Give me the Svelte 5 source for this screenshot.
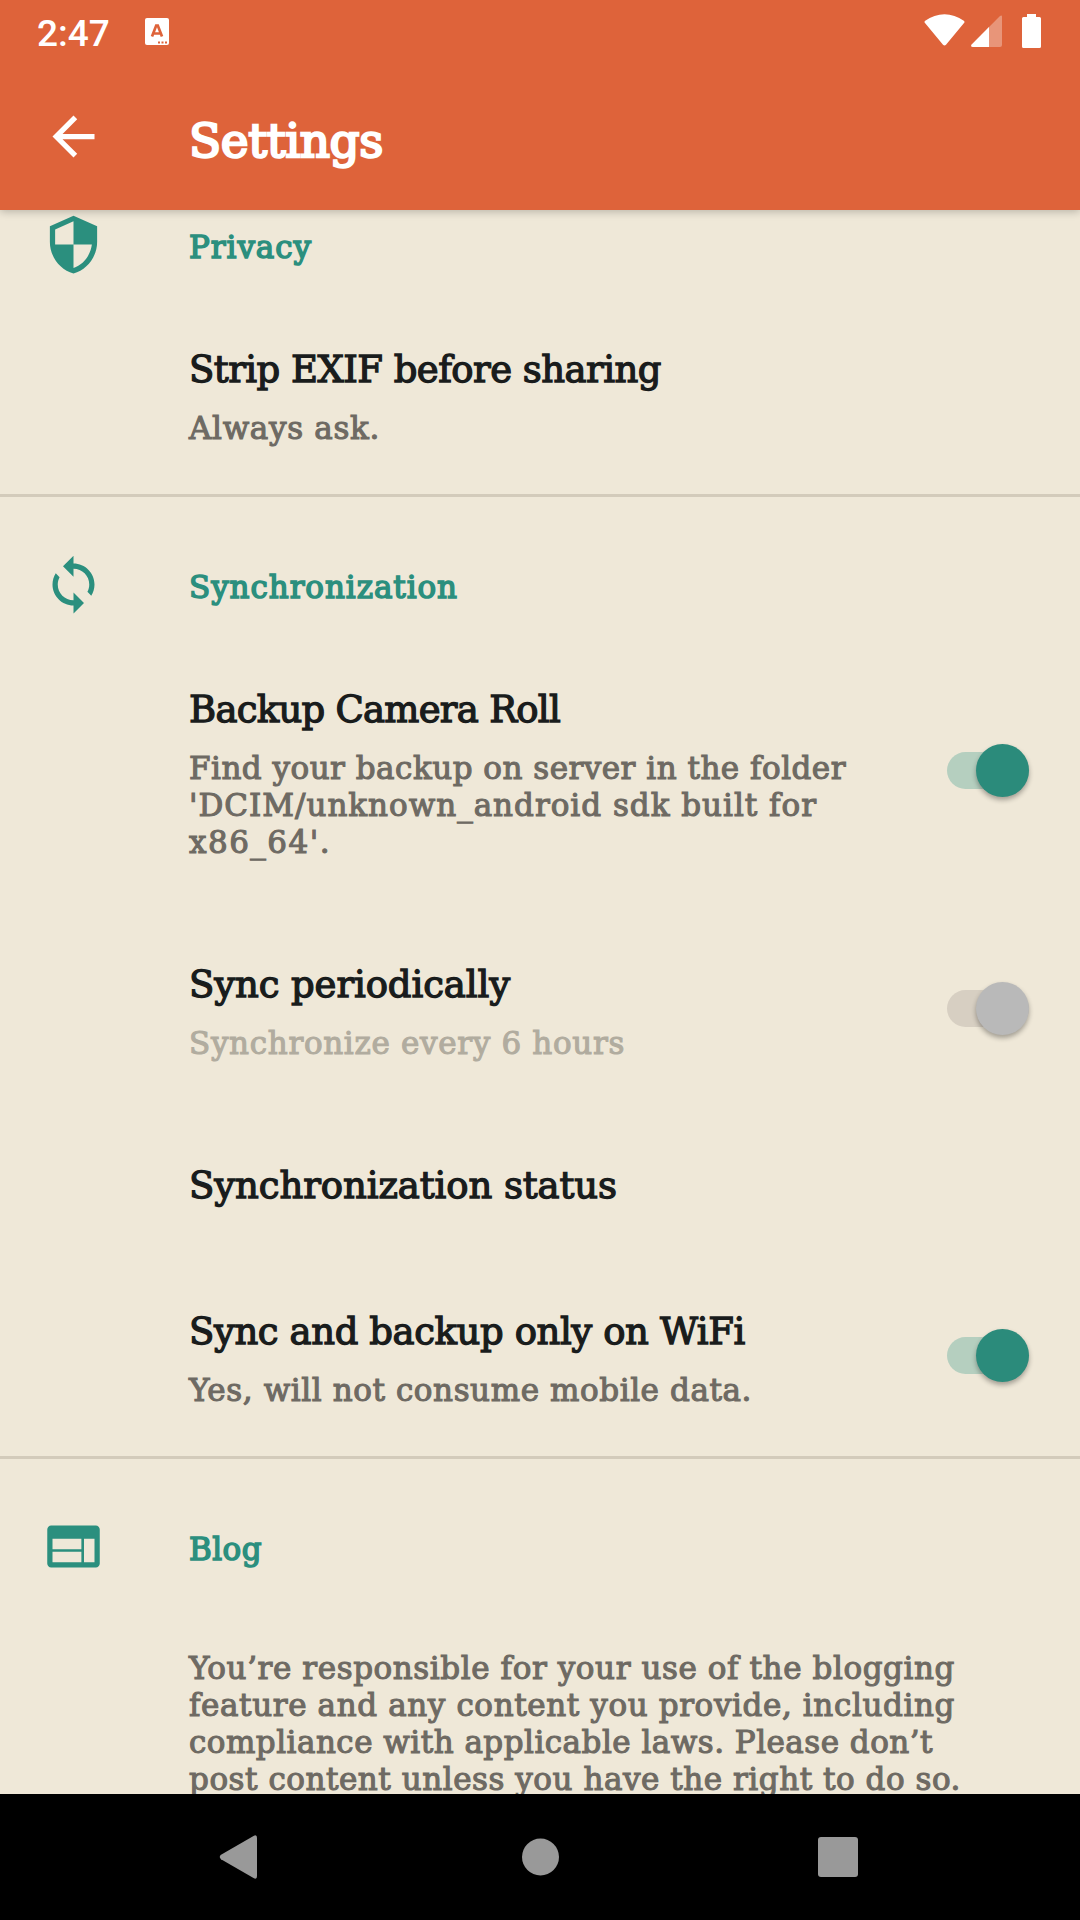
<script>
  const ICONS = {
    shield:
      'M12 1L3 5v6c0 5.55 3.84 10.74 9 12 5.16-1.26 9-6.45 9-12V5l-9-4zm0 10.99h7c-.53 4.12-3.28 7.79-7 8.94V12H5V6.3l7-3.11v8.8z',
    sync:
      'M12 4V1L8 5l4 4V6c3.31 0 6 2.69 6 6 0 1.01-.25 1.97-.7 2.8l1.46 1.46C19.54 15.03 20 13.57 20 12c0-4.42-3.58-8-8-8zm0 14c-3.31 0-6-2.69-6-6 0-1.01.25-1.97.7-2.8L5.24 7.74C4.46 8.97 4 10.43 4 12c0 4.42 3.58 8 8 8v3l4-4-4-4v3z',
    web:
      'M20.500 4h-17C2.670 4 2.010 4.670 2.010 5.500L2 18.500c0 .83.670 1.500 1.500 1.500h17c.83 0 1.500-.67 1.500-1.500v-13c0-.83-.67-1.500-1.500-1.500zM15 18H4v-4h11v4zm0-5H4V9h11v4zm5 5h-4V9h4v9z',
  };

  // Every line carries the width it is set to.
  const sections = [
    {
      icon: 'shield',
      label: ['Privacy', 123],
      items: [{ title: ['Strip EXIF before sharing', 472], lines: [['Always ask.', 191]] }],
    },
    {
      icon: 'sync',
      label: ['Synchronization', 269],
      items: [
        {
          title: ['Backup Camera Roll', 371],
          lines: [
            ['Find your backup on server in the folder', 657],
            ["'DCIM/unknown_android sdk built for", 628],
            ["x86_64'.", 142],
          ],
          toggle: 'on',
        },
        {
          title: ['Sync periodically', 321],
          lines: [['Synchronize every 6 hours', 436]],
          toggle: 'disabled',
        },
        { title: ['Synchronization status', 428], lines: [] },
        {
          title: ['Sync and backup only on WiFi', 556],
          lines: [['Yes, will not consume mobile data.', 563]],
          toggle: 'on',
        },
      ],
    },
    {
      icon: 'web',
      label: ['Blog', 73],
      items: [
        {
          lines: [
            ['You’re responsible for your use of the blogging', 766],
            ['feature and any content you provide, including', 766],
            ['compliance with applicable laws. Please don’t', 744],
            ['post content unless you have the right to do so.', 772],
          ],
        },
      ],
    },
  ];

  // Spreads the letters of a line so that it takes the given width.
  function fit(node, width) {
    const natural = node.getBoundingClientRect().width;
    const gap = (width - natural) / node.textContent.length;
    node.style.letterSpacing = `${gap}px`;
  }
</script>

<div class="screen">
  <header>
    <div class="status">
      <span class="clock">2:47</span>
      <svg class="keyboard" viewBox="0 0 24 27">
        <rect width="24" height="27" rx="2" fill="#fff" />
        <path d="M7 18.500L11.200 7.500h1.600L17 18.500M8.800 15.500h6.400" fill="none" stroke="#de633a" stroke-width="2.700" />
        <path d="M13 23.500h2v2h-2zM16.500 23.500h2v2h-2zM20 23.500h2v2h-2z" fill="#de633a" />
      </svg>
      <svg class="signals" viewBox="0 0 118 35" fill="#fff">
        <path d="M1.200 9.200C.3 8.400.3 7.400 1.200 6.700 13-2 28-2 39.800 6.700c.9.700.9 1.700 0 2.500L22 30.800q-1.500 1.600-3 0z" />
        <path d="M76 2q2-1.500 2 .8V31q0 2-2 2H49q-3-.3-1.300-2.500z" opacity=".32" />
        <path d="M65 13v20H49q-3-.3-1.300-2.500z" />
        <path d="M103 0h9v3h3.500q1.500 0 1.500 1.500v28q0 1.500-1.500 1.500h-16q-1.500 0-1.500-1.500v-28q0-1.500 1.500-1.500h3.500z" />
      </svg>
    </div>
    <div class="toolbar">
      <svg class="icon" viewBox="0 0 24 24">
        <path d="M20 11H7.830l5.590-5.590L12 4l-8 8 8 8 1.410-1.410L7.830 13H20v-2z" />
      </svg>
      <h1><span use:fit={194}>Settings</span></h1>
    </div>
  </header>

  <main>
    {#each sections as section}
      <section>
        <div class="heading">
          <svg class="icon" viewBox="0 0 24 24"><path d={ICONS[section.icon]} /></svg>
          <h2><span use:fit={section.label[1]}>{section.label[0]}</span></h2>
        </div>
        <div class="items">
          {#each section.items as item}
            <div class="item" class:disabled={item.toggle === 'disabled'} class:single={!item.lines.length} class:note={!item.title}>
              <div class="text">
                {#if item.title}
                  <h3><span use:fit={item.title[1]}>{item.title[0]}</span></h3>
                {/if}
                {#each item.lines as line}
                  <p><span use:fit={line[1]}>{line[0]}</span></p>
                {/each}
              </div>
              {#if item.toggle}
                <div class="switch"><div class="thumb"></div></div>
              {/if}
            </div>
          {/each}
        </div>
      </section>
    {/each}
  </main>

  <nav>
    <svg viewBox="0 0 48 48"><path d="M42 5v38q0 4-3.500 2.100L6 26.200q-2.500-2.200 0-4.400L38.500 2.900Q42 1 42 5z" /></svg>
    <svg viewBox="0 0 48 48"><circle cx="25.500" cy="24" r="18.500" /></svg>
    <svg viewBox="0 0 48 48"><rect x="4" y="4" width="40" height="40" rx="3" /></svg>
  </nav>
</div>

<style>
  :global(body) {
    margin: 0;
  }

  .screen {
    display: flex;
    flex-direction: column;
    width: 1080px;
    height: 1920px;
    overflow: hidden;
    background: #efe8d8;
    font-family: 'DejaVu Serif', serif;
  }

  h1,
  h2,
  h3,
  p {
    margin: 0;
    font-weight: 400;
    white-space: nowrap;
  }

  span {
    display: inline-block;
  }

  header {
    flex: none;
    height: 210px;
    z-index: 1;
    background: #de633a;
    color: #fff;
    box-shadow: 0 2px 8px rgba(0, 0, 0, 0.22);
  }

  .status {
    display: flex;
    align-items: flex-start;
    height: 63px;
    padding: 0 38px 0 37px;
    box-sizing: border-box;
  }

  .clock {
    width: 108px;
    padding-top: 12px;
    font: 500 37px/43px Roboto, sans-serif;
  }

  .keyboard {
    width: 24px;
    height: 27px;
    margin-top: 18px;
  }

  .signals {
    width: 118px;
    height: 35px;
    margin: 14px 0 0 auto;
  }

  .toolbar {
    display: flex;
    align-items: center;
    height: 147px;
    padding-left: 42px;
  }

  .icon {
    flex: none;
    width: 63px;
    height: 63px;
    fill: currentColor;
  }

  h1 {
    margin: 8px 0 0 84px;
    font-size: 47px;
    line-height: 60px;
    -webkit-text-stroke: 2.4px currentColor;
  }

  main {
    flex: 1;
    min-height: 0;
    overflow: hidden;
    padding-top: 3px;
  }

  section + section {
    border-top: 3px solid #d3cbbb;
    padding-top: 56px;
  }

  .heading {
    display: flex;
    height: 63px;
    padding-left: 42px;
    color: #2b8f7e;
  }

  h2 {
    margin: 16px 0 0 84px;
    font-size: 31px;
    line-height: 37px;
    -webkit-text-stroke: 1.5px currentColor;
  }

  .items {
    display: flex;
    flex-direction: column;
    gap: 99px;
    padding: 69px 51px 47px 189px;
  }

  .item {
    display: flex;
    align-items: center;
    justify-content: space-between;
  }

  .single {
    margin-bottom: -3px;
  }

  .note {
    padding-top: 3px;
  }

  h3 {
    height: 50px;
    color: #191c1c;
    font-size: 37px;
    line-height: 50px;
    -webkit-text-stroke: 1.3px currentColor;
  }

  h3 + p {
    margin-top: 15px;
  }

  p {
    height: 37px;
    color: #6e6a63;
    font-size: 31px;
    line-height: 36px;
    -webkit-text-stroke: 1.1px currentColor;
  }

  .disabled p {
    color: #b1ac9f;
  }

  .switch {
    display: flex;
    align-items: center;
    justify-content: flex-end;
    width: 82px;
    height: 37px;
    margin-bottom: 5px;
    border-radius: 19px;
    background: #b5cfbf;
  }

  .thumb {
    width: 53px;
    height: 53px;
    flex: none;
    border-radius: 50%;
    background: #2b8b7b;
    box-shadow: 0 3px 5px rgba(0, 0, 0, 0.32);
  }

  .disabled .switch {
    background: #d7cfc2;
  }

  .disabled .thumb {
    background: #b9b9b9;
  }

  nav {
    flex: none;
    display: flex;
    justify-content: space-between;
    height: 126px;
    box-sizing: border-box;
    padding: 39px 218px 0 215px;
    background: #000;
    fill: #999;
  }

  nav svg {
    width: 48px;
    height: 48px;
  }
</style>
